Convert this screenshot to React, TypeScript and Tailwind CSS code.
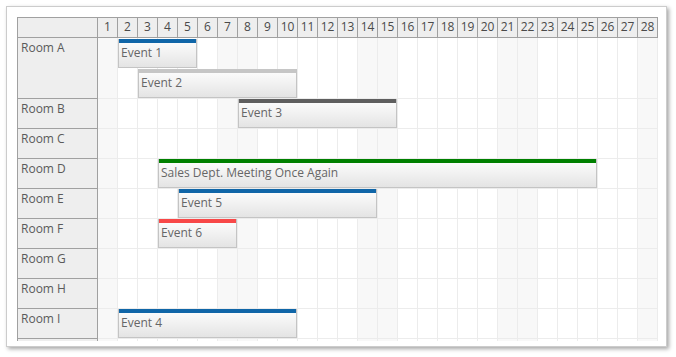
import React from "react";

type Ev = { s: number; e: number; t: number; text: string; c: string };
type Row = { name: string; tall?: boolean; events: Ev[] };

const days = Array.from({ length: 28 }, (_, i) => i + 1);
const weekend = new Set([1, 7, 8, 14, 15, 21, 22, 28]);

const rows: Row[] = [
  {
    name: "Room A",
    tall: true,
    events: [
      { s: 2, e: 5, t: 1, text: "Event 1", c: "#1066a8" },
      { s: 3, e: 10, t: 31, text: "Event 2", c: "#c6c6c6" },
    ],
  },
  { name: "Room B", events: [{ s: 8, e: 15, t: 0, text: "Event 3", c: "#5f5f5f" }] },
  { name: "Room C", events: [] },
  {
    name: "Room D",
    events: [{ s: 4, e: 25, t: 0, text: "Sales Dept. Meeting Once Again", c: "#008000" }],
  },
  { name: "Room E", events: [{ s: 5, e: 14, t: 0, text: "Event 5", c: "#1066a8" }] },
  { name: "Room F", events: [{ s: 4, e: 7, t: 0, text: "Event 6", c: "#f84848" }] },
  { name: "Room G", events: [] },
  { name: "Room H", events: [] },
  { name: "Room I", events: [{ s: 2, e: 10, t: 0, text: "Event 4", c: "#1066a8" }] },
  { name: "", events: [] },
];

export default function App() {
  return (
    <div
      className="w-[676px] h-[357px] bg-white pt-[6px] pl-[6px]"
      style={{ fontFamily: '"Open Sans", "Noto Sans", sans-serif' }}
    >
      <div className="w-[661px] h-[341px] border border-[#cccccc] bg-white shadow-[2px_2px_4px_rgba(0,0,0,0.35)] pt-[10px] pl-[10px] overflow-hidden">
        <div className="w-[641px] h-[324px] border-l border-t border-[#a0a0a0] overflow-hidden text-[12px]">
          {/* header */}
          <div className="flex h-[20px]">
            <div className="w-[80px] shrink-0 border-r border-b border-[#a0a0a0] bg-[#eeeeee]" />
            {days.map((d) => (
              <div
                key={d}
                className="w-[20px] shrink-0 border-r border-b border-[#a0a0a0] bg-[#eeeeee] text-center leading-[18px] text-[#4a4a4a]"
              >
                {d}
              </div>
            ))}
          </div>
          {rows.map((r, ri) => (
            <div key={ri} className={`flex ${r.tall ? "h-[61px]" : "h-[30px]"}`}>
              <div className="w-[80px] shrink-0 border-r border-b border-[#a0a0a0] bg-[#eeeeee] pl-[3px] pt-[2px] leading-[16px] text-[#5a5a5a]">
                {r.name}
              </div>
              <div className="relative flex">
                {days.map((d) => (
                  <div
                    key={d}
                    className={`w-[20px] shrink-0 border-r border-b border-[#ececec] ${
                      weekend.has(d) ? "bg-[#f8f8f8]" : "bg-white"
                    }`}
                  />
                ))}
                {r.events.map((ev, ei) => (
                  <div
                    key={ei}
                    className="absolute h-[29px] border-x border-b border-[#c4c4c4] bg-gradient-to-b from-white to-[#e4e4e4] overflow-hidden whitespace-nowrap"
                    style={{
                      left: (ev.s - 1) * 20,
                      top: ev.t,
                      width: (ev.e - ev.s + 1) * 20 - 1,
                    }}
                  >
                    <div className="h-[4px] -mx-px" style={{ backgroundColor: ev.c }} />
                    <div className="pl-[2px] leading-[16px] pt-[2px] text-[#666666]">{ev.text}</div>
                  </div>
                ))}
              </div>
            </div>
          ))}
        </div>
      </div>
    </div>
  );
}
